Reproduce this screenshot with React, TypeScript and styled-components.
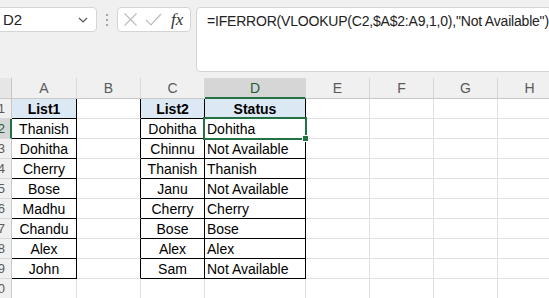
import React from "react";
import styled, { createGlobalStyle } from "styled-components";

const GlobalStyle = createGlobalStyle`
  html, body {
    margin: 0;
    padding: 0;
    background: #f0f0f0;
    overflow: hidden;
  }
  body {
    font-family: "Liberation Sans", Arial, sans-serif;
  }
`;

const Page = styled.div`
  width: 549px;
  height: 298px;
  overflow: hidden;
  background: #f0f0f0;
  display: flex;
  flex-direction: column;
`;

const FormulaBar = styled.div`
  height: 78px;
  display: flex;
  align-items: flex-start;
  padding-top: 7px;
  box-sizing: border-box;
  flex-shrink: 0;
  & > * {
    flex-shrink: 0;
  }
`;

const NameBox = styled.div`
  width: 101px;
  height: 25px;
  margin-left: -4px;
  box-sizing: border-box;
  background: #fff;
  border: 1px solid #d4d4d4;
  border-radius: 4px;
  display: flex;
  align-items: center;
  justify-content: space-between;
  padding: 0 8px 0 6px;
  font-size: 15px;
  color: #222;
`;

const Dots = styled.div`
  width: 20px;
  height: 25px;
  display: flex;
  flex-direction: column;
  align-items: center;
  justify-content: center;
  gap: 3px;
  span {
    width: 2px;
    height: 2px;
    background: #8a8a8a;
    border-radius: 1px;
  }
`;

const FxBox = styled.div`
  width: 74px;
  height: 25px;
  box-sizing: border-box;
  background: #fff;
  border: 1px solid #d4d4d4;
  border-radius: 4px;
  display: flex;
  align-items: center;
  padding: 0 0 0 5px;
  gap: 7px;
`;

const FxLabel = styled.span`
  font-family: "Liberation Serif", "Times New Roman", serif;
  font-style: italic;
  font-size: 17px;
  color: #333;
  margin-left: 2px;
`;

const FormulaInput = styled.div`
  margin-left: 5px;
  width: 370px;
  height: 65px;
  box-sizing: border-box;
  background: #fff;
  border: 1px solid #d4d4d4;
  border-radius: 4px;
  padding: 5px 0 0 10px;
  font-size: 14px;
  letter-spacing: -0.2px;
  color: #222;
  white-space: nowrap;
`;

const Sheet = styled.div`
  display: grid;
  grid-template-columns: 12px 65px 64px 64px 101px 64px 64px 64px 64px;
  grid-template-rows: 21px repeat(10, 20px);
  background: #fff;
`;

const Corner = styled.div`
  background: #e6e6e6;
  border-right: 1px solid #c8c8c8;
  border-bottom: 1px solid #c8c8c8;
  box-sizing: border-box;
`;

const ColHead = styled.div<{ $active?: boolean }>`
  box-sizing: border-box;
  background: ${(p) => (p.$active ? "#d6d6d6" : "#f0f0f0")};
  border-right: 1px solid #d8d8d8;
  border-bottom: ${(p) => (p.$active ? "2px solid #217346" : "1px solid #c8c8c8")};
  color: ${(p) => (p.$active ? "#1e5e3a" : "#5a5a5a")};
  font-size: 14px;
  display: flex;
  align-items: center;
  justify-content: center;
  padding-top: ${(p) => (p.$active ? "1px" : "0")};
`;

const RowHead = styled.div<{ $active?: boolean }>`
  box-sizing: border-box;
  background: ${(p) => (p.$active ? "#d6d6d6" : "#f0f0f0")};
  border-right: ${(p) => (p.$active ? "2px solid #217346" : "1px solid #c8c8c8")};
  border-bottom: 1px solid #d8d8d8;
  color: ${(p) => (p.$active ? "#1e5e3a" : "#5a5a5a")};
  font-size: 13px;
  display: flex;
  align-items: center;
  justify-content: flex-end;
  padding-right: ${(p) => (p.$active ? "5px" : "6px")};
  overflow: hidden;
`;

const Cell = styled.div<{
  $right?: boolean;
  $bottom?: boolean;
  $header?: boolean;
  $align?: "center" | "left";
}>`
  position: relative;
  box-sizing: border-box;
  background: ${(p) => (p.$header ? "#dde8f5" : "#fff")};
  border-right: 1px solid ${(p) => (p.$right ? "#000" : "#e1e1e1")};
  border-bottom: 1px solid ${(p) => (p.$bottom ? "#000" : "#e1e1e1")};
  font-size: 14px;
  font-weight: ${(p) => (p.$header ? 700 : 400)};
  color: #000;
  display: flex;
  align-items: center;
  justify-content: ${(p) => (p.$align === "left" ? "flex-start" : "center")};
  padding-left: ${(p) => (p.$align === "left" ? "2px" : "0")};
  white-space: nowrap;
`;

const Selection = styled.div`
  position: absolute;
  z-index: 2;
  left: -2px;
  top: -2px;
  right: -2px;
  bottom: -2px;
  border: 2px solid #217346;
  pointer-events: none;
  &::after {
    content: "";
    position: absolute;
    right: -4px;
    bottom: -4px;
    width: 5px;
    height: 5px;
    background: #217346;
    border: 1px solid #fff;
  }
`;

const cols = ["A", "B", "C", "D", "E", "F", "G", "H"];

const listA = ["Thanish", "Dohitha", "Cherry", "Bose", "Madhu", "Chandu", "Alex", "John"];
const listC = ["Dohitha", "Chinnu", "Thanish", "Janu", "Cherry", "Bose", "Alex", "Sam"];
const status = listC.map((n) => (listA.includes(n) ? n : "Not Available"));

// which cells sit inside the bordered tables (row index 1..9, col index 0..7)
const boxed = (r: number, c: number) =>
  r >= 1 && r <= 9 && (c === 0 || c === 2 || c === 3);

function cellText(r: number, c: number): string {
  if (r === 1) {
    if (c === 0) return "List1";
    if (c === 2) return "List2";
    if (c === 3) return "Status";
    return "";
  }
  if (r >= 2 && r <= 9) {
    if (c === 0) return listA[r - 2];
    if (c === 2) return listC[r - 2];
    if (c === 3) return status[r - 2];
  }
  return "";
}

export default function App() {
  const rows = Array.from({ length: 10 }, (_, i) => i + 1);
  return (
    <>
      <GlobalStyle />
      <Page>
        <FormulaBar>
          <NameBox>
            <span>D2</span>
            <svg width="10" height="6" viewBox="0 0 10 6">
              <path d="M1 1l4 4 4-4" fill="none" stroke="#555" strokeWidth="1.2" />
            </svg>
          </NameBox>
          <Dots>
            <span />
            <span />
            <span />
          </Dots>
          <FxBox>
            <svg width="15" height="15" viewBox="0 0 15 15">
              <path d="M1.5 1.5l12 12M13.5 1.5l-12 12" stroke="#bdbdbd" strokeWidth="1.2" />
            </svg>
            <svg width="17" height="15" viewBox="0 0 17 15">
              <path d="M1 8l5 5L16 2" fill="none" stroke="#bdbdbd" strokeWidth="1.2" />
            </svg>
            <FxLabel>fx</FxLabel>
          </FxBox>
          <FormulaInput>=IFERROR(VLOOKUP(C2,$A$2:A9,1,0),"Not Available")</FormulaInput>
        </FormulaBar>
        <Sheet>
          <Corner />
          {cols.map((c) => (
            <ColHead key={c} $active={c === "D"}>
              {c}
            </ColHead>
          ))}
          {rows.map((r) => (
            <React.Fragment key={r}>
              <RowHead $active={r === 2}>{r}</RowHead>
              {cols.map((_, c) => {
                const inBox = boxed(r, c);
                const right = inBox || boxed(r, c + 1);
                const bottom = inBox || boxed(r + 1, c);
                return (
                  <Cell
                    key={c}
                    $right={right}
                    $bottom={bottom}
                    $header={r === 1 && inBox}
                    $align={c === 3 && r > 1 ? "left" : "center"}
                  >
                    {cellText(r, c)}
                    {r === 2 && c === 3 && <Selection />}
                  </Cell>
                );
              })}
            </React.Fragment>
          ))}
        </Sheet>
      </Page>
    </>
  );
}
